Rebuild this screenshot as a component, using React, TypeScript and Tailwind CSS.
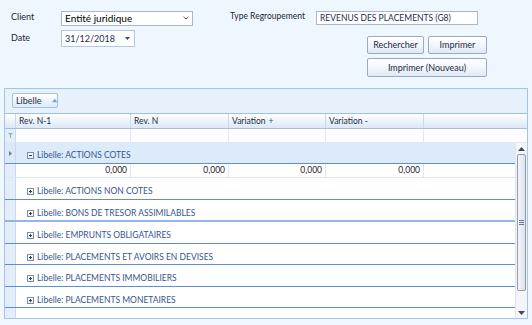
import React from "react";

const groups = [
  "ACTIONS NON COTES",
  "BONS DE TRESOR ASSIMILABLES",
  "EMPRUNTS OBLIGATAIRES",
  "PLACEMENTS ET AVOIRS EN DEVISES",
  "PLACEMENTS IMMOBILIERS",
  "PLACEMENTS MONETAIRES",
];

function ExpandBox({ minus }: { minus?: boolean }) {
  return (
    <span className="relative inline-block w-[7px] h-[7px] border border-[#7d8ea6] bg-gradient-to-b from-white to-[#e3ebf5] mr-[3px] shrink-0">
      <span className="absolute left-[1px] top-[2px] w-[3px] h-[1px] bg-[#2a3a55]" />
      {!minus && <span className="absolute left-[2px] top-[1px] w-[1px] h-[3px] bg-[#2a3a55]" />}
    </span>
  );
}

function Btn({ children, className }: { children: React.ReactNode; className: string }) {
  return (
    <div
      className={
        "flex items-center justify-center border border-[#9aaac2] rounded-[2px] bg-gradient-to-b from-[#ffffff] via-[#f3f7fc] to-[#dfe8f4] text-[9px] text-[#1c2a44] " +
        className
      }
    >
      {children}
    </div>
  );
}

export default function App() {
  return (
    <div className="w-[532px] h-[325px] overflow-hidden bg-[#eef7fe] font-['Lato',sans-serif] text-[#1e2533]">
      {/* Top form */}
      <div className="h-[88px] flex">
        <div className="pl-[11px] pt-[11px] w-[230px]">
          <div className="flex items-center h-[14px]">
            <span className="w-[50px] text-[9px] -mt-[3px]">Client</span>
            <div className="w-[132px] h-[15px] border border-[#a9b7cc] bg-white flex items-center pl-[3px] pr-[3px]">
              <span className="text-[10px] text-black flex-1 leading-none">Entité juridique</span>
              <svg width="6" height="4" viewBox="0 0 6 4">
                <path d="M0.5 0.8 L3 3 L5.5 0.8" fill="none" stroke="#555" strokeWidth="1" />
              </svg>
            </div>
          </div>
          <div className="flex items-start h-[17px] mt-[5px]">
            <span className="w-[50px] text-[9px] pt-[1px]">Date</span>
            <div className="w-[74px] h-[17px] border border-[#b6c7dd] bg-white flex items-center pl-[3px] pr-[4px]">
              <span className="text-[9px] text-[#1b2d4e] flex-1 leading-none">31/12/2018</span>
              <svg width="5" height="3" viewBox="0 0 5 3">
                <path d="M0 0 L5 0 L2.5 3 Z" fill="#3a4a66" />
              </svg>
            </div>
          </div>
        </div>
        <div className="pt-[11px] flex flex-col">
          <div className="flex items-center h-[14px]">
            <span className="w-[86px] text-[8.5px] -mt-[3px]">Type Regroupement</span>
            <div className="w-[162px] h-[14px] border border-[#a9b7cc] bg-white flex items-center pl-[3px]">
              <span className="text-[8.5px] text-[#1b2d4e] leading-none">REVENUS DES PLACEMENTS (G8)</span>
            </div>
          </div>
          <div className="ml-[137px] mt-[11px] flex flex-col gap-[4px]">
            <div className="flex gap-[4px]">
              <Btn className="w-[57px] h-[18px]">Rechercher</Btn>
              <Btn className="w-[59px] h-[18px]">Imprimer</Btn>
            </div>
            <Btn className="w-[120px] h-[19px]">Imprimer (Nouveau)</Btn>
          </div>
        </div>
      </div>

      {/* Grid panel */}
      <div className="mx-[4px] h-[231px] border border-[#a7c4e6] bg-white flex flex-col overflow-hidden">
        {/* group panel */}
        <div className="h-[25px] bg-[#e6f1fc] border-b border-[#9fbfe6] flex items-start pl-[7px] pt-[4px] shrink-0">
          <div className="w-[46px] h-[15px] border border-[#a6c0e2] rounded-[2px] bg-gradient-to-b from-white to-[#dde9f7] flex items-center pl-[3px] text-[9px] text-[#1e2b44]">
            <span className="leading-none">Libelle</span>
            <svg className="ml-[10px]" width="8" height="5" viewBox="0 0 8 5">
              <path d="M0 5 L4 0 L8 5 Z" fill="#7aa3d6" />
            </svg>
          </div>
        </div>
        {/* header */}
        <div className="h-[15px] flex bg-gradient-to-b from-white to-[#dce8f7] border-b border-[#9fbfe6] text-[8.5px] text-[#1e2b44] shrink-0">
          <div className="w-[11px] border-r border-[#c8daf0]" />
          <div className="w-[115px] border-r border-[#c8daf0] pl-[3px] flex items-center leading-none">Rev. N-1</div>
          <div className="w-[98px] border-r border-[#c8daf0] pl-[3px] flex items-center leading-none">Rev. N</div>
          <div className="w-[97px] border-r border-[#c8daf0] pl-[3px] flex items-center leading-none">
            Variation <span className="ml-[3px] text-[#2b4f86]">+</span>
          </div>
          <div className="w-[98px] border-r border-[#c8daf0] pl-[3px] flex items-center leading-none">Variation -</div>
          <div className="flex-1" />
        </div>
        {/* filter row */}
        <div className="h-[14px] flex border-b border-[#dbe7f5] shrink-0">
          <div className="w-[11px] bg-[#e3eefa] border-r border-[#c8daf0] flex items-center justify-center">
            <svg width="5" height="5" viewBox="0 0 5 5">
              <path d="M0 0 L5 0 L3 2 L3 5 L2 5 L2 2 Z" fill="#9aa9bd" />
            </svg>
          </div>
          <div className="w-[115px] border-r border-[#dbe7f5]" />
          <div className="w-[98px] border-r border-[#dbe7f5]" />
          <div className="w-[97px] border-r border-[#dbe7f5]" />
          <div className="w-[98px] border-r border-[#dbe7f5]" />
          <div className="flex-1" />
        </div>
        {/* body */}
        <div className="flex-1 flex min-h-0">
          <div className="flex-1 flex flex-col min-w-0 overflow-hidden">
            {/* selected group */}
            <div className="h-[21px] flex bg-[#dcebfb] border-b border-[#5b8ed6] shrink-0">
              <div className="w-[11px] bg-[#dbe8f8] border-r border-[#c8daf0] flex items-center justify-center">
                <svg width="3" height="5" viewBox="0 0 3 5">
                  <path d="M0 0 L3 2.5 L0 5 Z" fill="#6b7f9c" />
                </svg>
              </div>
              <div className="flex items-center pl-[11px] pt-[5px] text-[8.5px] text-[#34558d]">
                <ExpandBox minus />
                <span className="leading-none">Libelle: ACTIONS COTES</span>
              </div>
            </div>
            {/* data row */}
            <div className="h-[14px] flex border-b border-[#dbe7f5] text-[8.5px] text-[#1e2533] shrink-0">
              <div className="w-[11px] bg-[#e3eefa] border-r border-[#c8daf0]" />
              <div className="w-[115px] border-r border-[#dbe7f5] pr-[3px] flex items-center justify-end leading-none">0,000</div>
              <div className="w-[98px] border-r border-[#dbe7f5] pr-[3px] flex items-center justify-end leading-none">0,000</div>
              <div className="w-[97px] border-r border-[#dbe7f5] pr-[3px] flex items-center justify-end leading-none">0,000</div>
              <div className="w-[98px] border-r border-[#dbe7f5] pr-[3px] flex items-center justify-end leading-none">0,000</div>
              <div className="flex-1" />
            </div>
            {groups.map((g, i) => (
              <div
                key={g}
                className={
                  "flex shrink-0 " +
                  (i === 1
                    ? "h-[22px] border-b-2 border-[#93b6e6]"
                    : i % 2 === 0
                    ? "h-[22px] border-b border-[#5b8ed6]"
                    : "h-[21px] border-b border-[#5b8ed6]")
                }
              >
                <div className="w-[11px] bg-[#e3eefa] border-r border-[#c8daf0]" />
                <div className="flex items-center pl-[11px] pt-[6px] text-[8.5px] text-[#34558d]">
                  <ExpandBox />
                  <span className="leading-none">Libelle: {g}</span>
                </div>
              </div>
            ))}
            <div className="h-[21px] flex shrink-0">
              <div className="w-[11px] bg-[#e3eefa] border-r border-[#c8daf0]" />
              <div className="flex items-center pl-[11px] pt-[9px] text-[8.5px] text-[#34558d]">
                <ExpandBox />
                <span className="leading-none">Libelle: REVENUS DIVERS</span>
              </div>
            </div>
          </div>
          {/* scrollbar */}
          <div className="w-[12px] bg-[#f3f5f8] border-l border-[#e1e6ee] flex flex-col items-center shrink-0">
            <div className="h-[11px] flex items-center justify-center">
              <svg width="7" height="4" viewBox="0 0 7 4">
                <path d="M0 4 L3.5 0 L7 4 Z" fill="#3b4a63" />
              </svg>
            </div>
            <div className="w-[9px] h-[137px] border border-[#8e9bb4] rounded-[2px] bg-gradient-to-r from-[#f4f6fa] to-[#dde3ec] flex flex-col items-center justify-center gap-[1px]">
              <div className="w-[5px] h-[1px] bg-[#6d7890]" />
              <div className="w-[5px] h-[1px] bg-[#6d7890]" />
              <div className="w-[5px] h-[1px] bg-[#6d7890]" />
            </div>
            <div className="flex-1" />
            <div className="h-[10px] flex items-center justify-center">
              <svg width="7" height="4" viewBox="0 0 7 4">
                <path d="M0 0 L7 0 L3.5 4 Z" fill="#3b4a63" />
              </svg>
            </div>
          </div>
        </div>
      </div>
    </div>
  );
}
